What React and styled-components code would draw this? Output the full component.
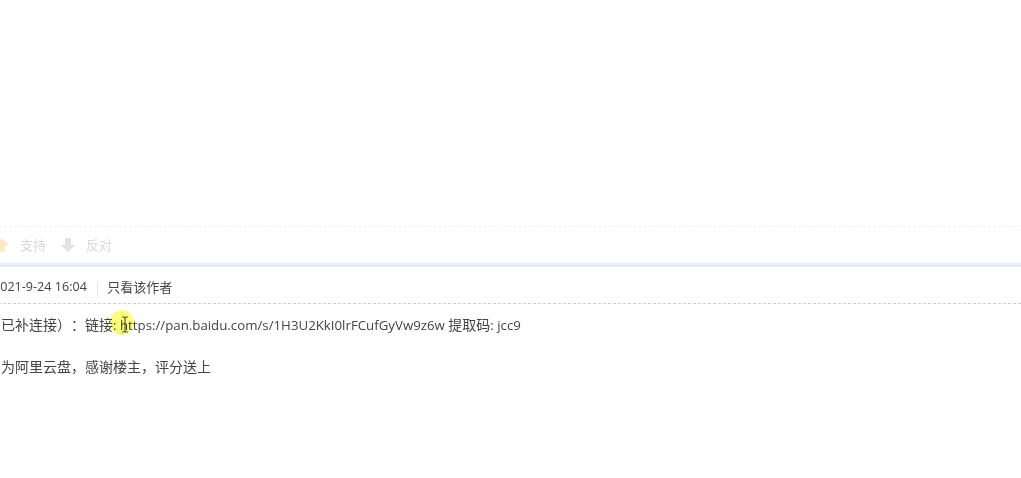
import React from "react";
import styled, { createGlobalStyle } from "styled-components";

const Global = createGlobalStyle`
  html, body { margin: 0; padding: 0; background: #fff; overflow: hidden; }
  body { font-family: "Noto Sans CJK SC", sans-serif; font-size: 14px; color: #444; text-spacing-trim: space-all; }
`;

const Page = styled.div`
  width: 1021px;
  height: 478px;
  overflow: hidden;
  position: relative;
  padding-top: 226px;
  box-sizing: border-box;
`;

const VoteBar = styled.div`
  height: 36px;
  border-top: 1px dashed #f2f2ee;
  display: flex;
  align-items: center;
  margin-left: -6px;
  color: #d9d9d9;
  font-size: 13px;
  line-height: 14px;
`;

const Vote = styled.span`
  display: inline-flex;
  align-items: center;
  gap: 10px;
  margin-right: 14px;
  padding-bottom: 1px;
`;

const Band = styled.div`
  height: 4px;
  background: #e5edf2;
`;

const MetaRow = styled.div`
  height: 33px;
  padding-top: 3px;
  border-bottom: 1px dashed #cdcdcd;
  display: flex;
  align-items: center;
  margin-left: -7px;
  font-size: 13px;
  line-height: 16px;
  color: #444;
`;

const Latin = styled.span`
  font-family: "Open Sans", sans-serif;
  font-size: ${(p) => p.$size}px;
`;

const Pipe = styled.span`
  color: #ddd;
  font-size: 12px;
  margin: 0 8px 0 9px;
`;

const Content = styled.div`
  padding-top: 10px;
  font-size: 14px;
  color: #444;
  white-space: nowrap;
`;

const Line = styled.p`
  height: 21px;
  line-height: 21px;
  margin: 0 0 21px -13px;
`;

const Highlight = styled.div`
  position: absolute;
  left: 110px;
  top: 310px;
  width: 24px;
  height: 25px;
  border-radius: 50%;
  background: #fdfd78;
  mix-blend-mode: multiply;
`;

const Cursor = styled.svg`
  position: absolute;
  left: 121px;
  top: 316px;
`;

const Arrow = ({ color, down }) => (
  <svg width="16" height="16" viewBox="0 0 16 16" style={down ? { transform: "rotate(180deg)" } : undefined}>
    <path d="M8 1 L15 8 H11 V15 H5 V8 H1 Z" fill={color} />
  </svg>
);

export default function App() {
  return (
    <Page>
      <Global />
      <VoteBar>
        <Vote>
          <Arrow color="#fde8c4" />
          支持
        </Vote>
        <Vote>
          <Arrow color="#e2e2e2" down />
          反对
        </Vote>
      </VoteBar>
      <Band />
      <MetaRow>
        <Latin $size={12.6}>2021-9-24 16:04</Latin>
        <Pipe>|</Pipe>
        <span>只看该作者</span>
      </MetaRow>
      <Content>
        <Line>
          （已补连接）：链接<Latin $size={13.28}>: https://pan.baidu.com/s/1H3U2KkI0lrFCufGyVw9z6w </Latin>提取码<Latin $size={13.28}>: jcc9</Latin>
        </Line>
        <Line>因为阿里云盘，感谢楼主，评分送上</Line>
      </Content>
      <Highlight />
      <Cursor width="8" height="17" viewBox="0 0 8 17">
        <path d="M1 1 H3 L4 2 L5 1 H7 M4 2 V15 M1 16 H3 L4 15 L5 16 H7" fill="none" stroke="#555" strokeWidth="1.2" />
      </Cursor>
    </Page>
  );
}
